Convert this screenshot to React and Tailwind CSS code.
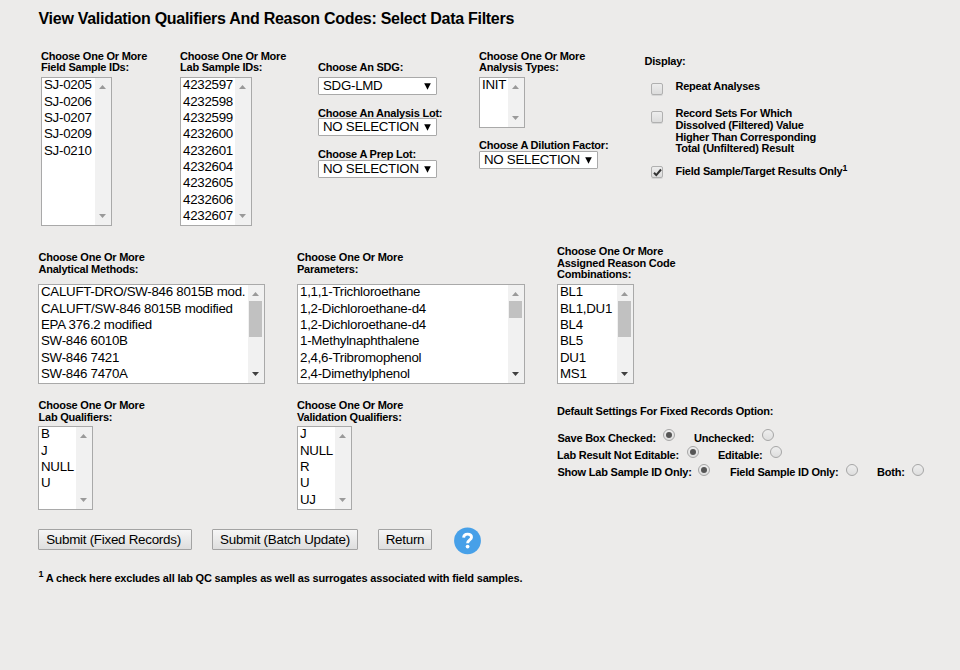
import React from "react";

const FONT = "font-['Liberation_Sans',Arial,sans-serif]";

function Label({ lines, className = "" }) {
  return (
    <div className={"text-[11px] tracking-[-0.22px] font-bold leading-[11.7px] whitespace-nowrap " + className}>
      {lines.map((line) => (
        <div key={line}>{line}</div>
      ))}
    </div>
  );
}

function Arrow({ down, active }) {
  return (
    <svg width="7" height="4" viewBox="0 0 7 4" className="block shrink-0">
      <path d={down ? "M0 0H7L3.5 4Z" : "M0 4H7L3.5 0Z"} fill={active ? "#404040" : "#9a9a9a"} />
    </svg>
  );
}

function ListBox({ items, size, thumb }) {
  return (
    <div className={"flex border border-[#a9a9a9] bg-white overflow-hidden " + size}>
      <div className="-mt-[0.6px] flex-1 min-w-0 pl-[2px] text-[13.3px] tracking-[-0.27px] leading-[16.35px] whitespace-nowrap overflow-hidden">
        {items.map((item, i) => (
          <div key={i}>{item}</div>
        ))}
      </div>
      <div className="flex w-4 shrink-0 flex-col items-center justify-between bg-[#f1f1f1] pt-[7px] pb-[7px] pr-px">
        <div className="flex w-full flex-col items-center gap-[5px]">
          <Arrow />
          {thumb && <div className={"w-[13px] bg-[#c1c1c1] " + thumb} />}
        </div>
        <Arrow down active={Boolean(thumb)} />
      </div>
    </div>
  );
}

function Select({ value }) {
  return (
    <div className="flex h-[18px] w-[119px] items-center justify-between rounded-[1px] border border-[#a9a9a9] bg-white pl-1 pr-[5px] text-[13.3px] tracking-[-0.27px] leading-4 whitespace-nowrap">
      <span>{value}</span>
      <svg width="7" height="7" viewBox="0 0 7 7" className="block shrink-0">
        <path d="M0.2 0.2H6.8L3.5 6.8Z" fill="#000" />
      </svg>
    </div>
  );
}

function Check({ checked }) {
  return (
    <div className="flex size-3 shrink-0 items-center justify-center rounded-[2px] border border-[#b0b0b0] bg-gradient-to-b from-[#ededed] to-[#dcdcdc] shadow-[0_1px_0_#d6d6d6]">
      {checked && (
        <svg width="9" height="9" viewBox="0 0 9 9" className="block">
          <path d="M1 4.7L3.3 7.1L8 1.5" fill="none" stroke="#333" strokeWidth="2" />
        </svg>
      )}
    </div>
  );
}

function Radio({ checked, className = "" }) {
  return (
    <div className={"flex size-3 shrink-0 items-center justify-center rounded-full border border-[#a6a6a6] bg-gradient-to-b from-[#eeeeee] to-[#dedede] " + className}>
      {checked && <div className="size-[6px] rounded-full bg-[#555]" />}
    </div>
  );
}

function Button({ children, size }) {
  return (
    <button className={"flex h-[21px] items-center justify-center rounded-[1px] border border-[#a3a3a3] bg-gradient-to-b from-[#f6f6f6] to-[#dedede] text-[13.4px] tracking-[-0.27px] leading-4 whitespace-nowrap " + size}>
      {children}
    </button>
  );
}

export default function App() {
  return (
    <div className={"h-[670px] w-[960px] overflow-hidden bg-[#ecebea] text-black " + FONT}>
      <h1 className="h-[50px] pt-[9px] pl-[38.5px] text-[16px] tracking-[-0.28px] font-bold leading-5 whitespace-nowrap">
        View Validation Qualifiers And Reason Codes: Select Data Filters
      </h1>

      <div className="flex h-[196px] pl-[41px]">
        <div className="w-[139px]">
          <Label lines={["Choose One Or More", "Field Sample IDs:"]} className="h-[27px] pt-[0.5px]" />
          <ListBox size="h-[149px] w-[71px]" items={["SJ-0205", "SJ-0206", "SJ-0207", "SJ-0209", "SJ-0210"]} />
        </div>
        <div className="w-[138px]">
          <Label lines={["Choose One Or More", "Lab Sample IDs:"]} className="h-[27px] pt-[0.5px]" />
          <ListBox
            size="h-[149px] w-[72px]"
            items={["4232597", "4232598", "4232599", "4232600", "4232601", "4232604", "4232605", "4232606", "4232607"]}
          />
        </div>
        <div className="w-[161px] pt-3">
          <Label lines={["Choose An SDG:"]} className="h-[15px]" />
          <Select value="SDG-LMD" />
          <Label lines={["Choose An Analysis Lot:"]} className="mt-3 h-[11px] pt-[0.5px]" />
          <Select value="NO SELECTION" />
          <Label lines={["Choose A Prep Lot:"]} className="mt-3 h-3 pt-[0.5px]" />
          <Select value="NO SELECTION" />
        </div>
        <div className="w-[165px]">
          <Label lines={["Choose One Or More", "Analysis Types:"]} className="h-[27px] pt-[0.5px]" />
          <ListBox size="h-[51px] w-[46px]" items={["INIT"]} />
          <Label lines={["Choose A Dilution Factor:"]} className="mt-3 h-[11px]" />
          <Select value="NO SELECTION" />
        </div>
        <div className="pt-[6px]">
          <Label lines={["Display:"]} className="h-6 pl-[0.5px]" />
          <div className="flex h-7 gap-[12.5px] pl-[7px]">
            <div className="pt-[3px]"><Check /></div>
            <Label lines={["Repeat Analyses"]} className="pt-[0.5px]" />
          </div>
          <div className="flex h-[58px] gap-[12.5px] pl-[7px]">
            <div className="pt-[3px]"><Check /></div>
            <Label
              className="pt-[0.2px]"
              lines={["Record Sets For Which", "Dissolved (Filtered) Value", "Higher Than Corresponding", "Total (Unfiltered) Result"]}
            />
          </div>
          <div className="flex gap-[12.5px] pl-[7px]">
            <div><Check checked /></div>
            <div className="text-[11px] tracking-[-0.22px] font-bold leading-[11.7px] whitespace-nowrap">
              Field Sample/Target Results Only<sup className="text-[8.8px] leading-none">1</sup>
            </div>
          </div>
        </div>
      </div>

      <div className="flex h-[154px] pl-[38px]">
        <div className="w-[259px] pt-[6px]">
          <Label lines={["Choose One Or More", "Analytical Methods:"]} className="h-8 pl-[0.5px]" />
          <ListBox
            size="h-[100px] w-[227px]"
            thumb="h-9"
            items={["CALUFT-DRO/SW-846 8015B mod.", "CALUFT/SW-846 8015B modified", "EPA 376.2 modified", "SW-846 6010B", "SW-846 7421", "SW-846 7470A"]}
          />
        </div>
        <div className="w-[260px] pt-[6px]">
          <Label lines={["Choose One Or More", "Parameters:"]} className="h-8" />
          <ListBox
            size="h-[100px] w-[228px]"
            thumb="h-[17px]"
            items={["1,1,1-Trichloroethane", "1,2-Dichloroethane-d4", "1,2-Dichloroethane-d4", "1-Methylnaphthalene", "2,4,6-Tribromophenol", "2,4-Dimethylphenol"]}
          />
        </div>
        <div>
          <Label lines={["Choose One Or More", "Assigned Reason Code", "Combinations:"]} className="h-[38px]" />
          <ListBox size="h-[100px] w-[77px]" thumb="h-9" items={["BL1", "BL1,DU1", "BL4", "BL5", "DU1", "MS1"]} />
        </div>
      </div>

      <div className="flex h-[129px] pl-[38px]">
        <div className="w-[259px]">
          <Label lines={["Choose One Or More", "Lab Qualifiers:"]} className="h-[26px] pl-[0.5px]" />
          <ListBox size="h-[84px] w-[55px]" items={["B", "J", "NULL", "U"]} />
        </div>
        <div className="w-[260px]">
          <Label lines={["Choose One Or More", "Validation Qualifiers:"]} className="h-[26px]" />
          <ListBox size="h-[84px] w-[55px]" items={["J", "NULL", "R", "U", "UJ"]} />
        </div>
        <div className="pt-[6px]">
          <Label lines={["Default Settings For Fixed Records Option:"]} className="h-[23px]" />
          <div className="flex h-[17px]">
            <Label lines={["Save Box Checked:"]} className="w-[106px] pt-[3.5px] pl-[0.5px]" />
            <Radio checked />
            <Label lines={["Unchecked:"]} className="ml-[19px] w-[68px] pt-[3.5px]" />
            <Radio />
          </div>
          <div className="flex h-[18px]">
            <Label lines={["Lab Result Not Editable:"]} className="w-[130px] pt-[3.5px]" />
            <Radio checked />
            <Label lines={["Editable:"]} className="ml-[19px] w-[52px] pt-[3.5px]" />
            <Radio />
          </div>
          <div className="flex h-[18px]">
            <Label lines={["Show Lab Sample ID Only:"]} className="w-[141px] pt-[3px] pl-[0.5px]" />
            <Radio checked />
            <Label lines={["Field Sample ID Only:"]} className="ml-[20px] w-[116px] pt-[3px]" />
            <Radio />
            <Label lines={["Both:"]} className="ml-[19px] w-[35px] pt-[3px]" />
            <Radio />
          </div>
        </div>
      </div>

      <div className="flex h-[42px] items-start gap-5 pl-[38px]">
        <Button size="w-[154px] pr-[3px]">Submit (Fixed Records)</Button>
        <Button size="w-[146px]">Submit (Batch Update)</Button>
        <Button size="w-[54px]">Return</Button>
        <svg width="28" height="28" viewBox="0 0 28 28" className="-mt-[2px] ml-[2px] block shrink-0">
          <circle cx="13.5" cy="13.8" r="13.4" fill="#47a0e8" />
          <path d="M9.6 10.6C9.8 7.9 11.4 7.1 13.6 7.1C15.9 7.1 17.5 8.2 17.5 10.2C17.5 13 13.6 12.8 13.6 16.3" fill="none" stroke="#fff" strokeWidth="2.9" />
          <circle cx="13.6" cy="19.6" r="1.9" fill="#fff" />
        </svg>
      </div>
      <div className="pl-[38.5px] pt-[0.5px] text-[11px] tracking-[-0.19px] font-bold leading-[13px] whitespace-nowrap">
        <sup className="text-[9px] leading-none">1</sup> A check here excludes all lab QC samples as well as surrogates associated with field samples.
      </div>
    </div>
  );
}
